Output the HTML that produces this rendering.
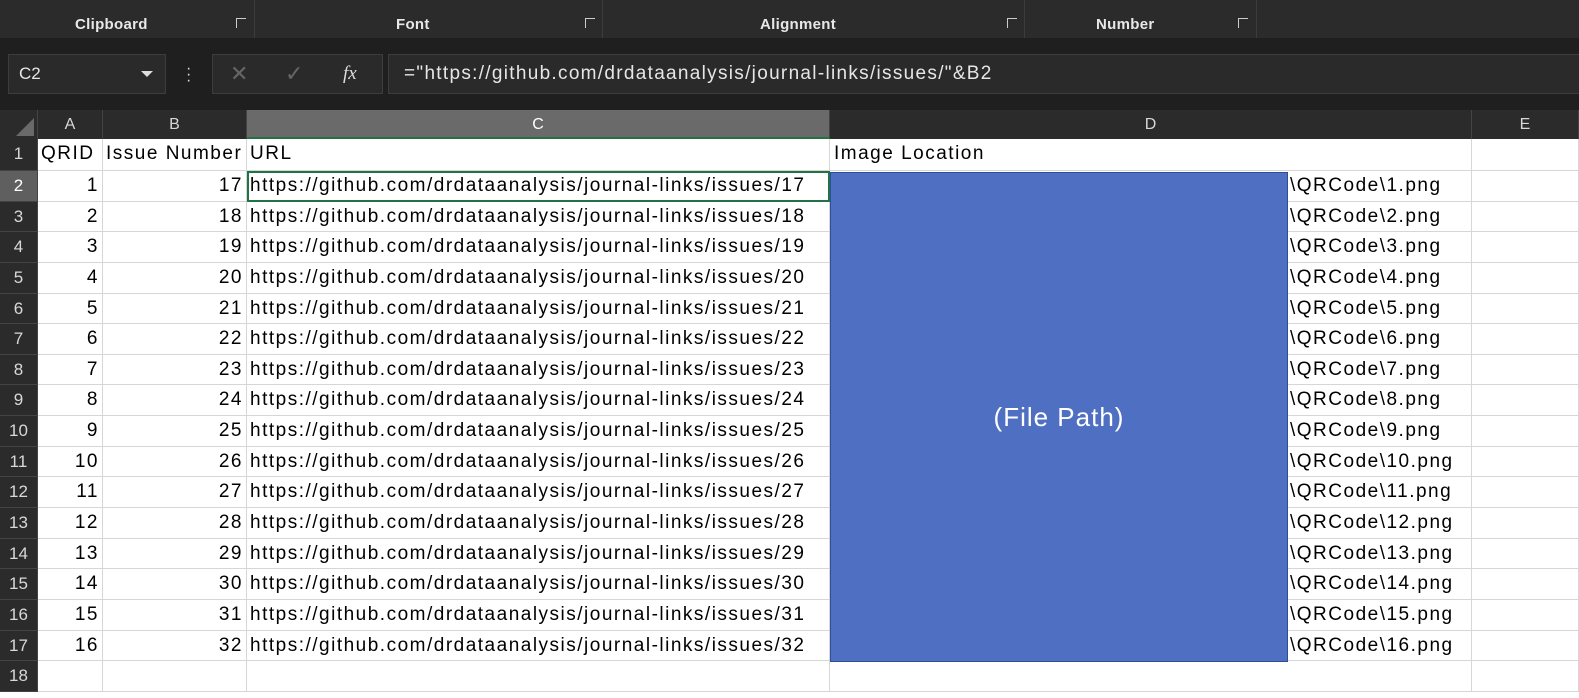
<!DOCTYPE html><html><head><style>
*{margin:0;padding:0;box-sizing:border-box}
body{width:1579px;height:698px;background:#fff;position:relative;overflow:hidden;font-family:"Liberation Sans",Arial,sans-serif}
.rib{position:absolute;left:0;top:0;width:1579px;height:38px;background:#2b2b2b;color:#e8e8e8;font-size:15px;font-weight:bold;letter-spacing:0.3px}
.rib span{position:absolute;top:16px}
.rib i{position:absolute;top:0;width:1px;height:38px;background:#3c3c3c}
.rib b{position:absolute;top:18px;width:10px;height:10px;border:1px solid #ccc;border-right:none;border-bottom:none}
.fb{position:absolute;left:0;top:38px;width:1579px;height:72px;background:#1f1f1f}
.box{position:absolute;background:#2a2a2a;border:1px solid #3d3d3d;color:#e6e6e6}
.colh{position:absolute;top:110px;height:29px;left:0;width:1579px;background:#2b2b2b}
.colh div{position:absolute;top:0;height:29px;line-height:29px;text-align:center;color:#d8d8d8;font-size:16px;border-right:1px solid #444}
.rows{position:absolute;left:0;top:139px;width:1579px;display:flex;flex-direction:column}
.r{height:30.65px;display:flex;font-size:19px;letter-spacing:1.5px;color:#000;line-height:30px}
.r div{flex:none;border-right:1px solid #d6d6d6;border-bottom:1px solid #d6d6d6;white-space:nowrap;overflow:visible;padding:0 3px}
.r .h{width:38px;background:#2b2b2b;color:#d8d8d8;border-color:#444;text-align:center;padding:0;font-size:17px;letter-spacing:0}
.a{width:65px;text-align:right}.b{width:144px;text-align:right}.c{width:583px}.d{width:642px;padding-left:460px!important}.e{width:107px}
</style></head><body>
<div class="rib">
<span style="left:75px">Clipboard</span><b style="left:236px"></b><i style="left:254px"></i>
<span style="left:396px">Font</span><b style="left:585px"></b><i style="left:602px"></i>
<span style="left:760px">Alignment</span><b style="left:1007px"></b><i style="left:1024px"></i>
<span style="left:1096px">Number</span><b style="left:1238px"></b><i style="left:1256px"></i>
</div>
<div class="fb">
<div class="box" style="left:8px;top:16px;width:158px;height:40px;font-size:17px;line-height:38px;padding-left:10px">C2<span style="position:absolute;right:12px;top:16px;border-left:6px solid transparent;border-right:6px solid transparent;border-top:6px solid #ddd"></span></div>
<div style="position:absolute;left:186px;top:28px;color:#ddd;font-size:16px;line-height:6px">·<br>·<br>·</div>
<div class="box" style="left:212px;top:16px;width:171px;height:40px;color:#666;font-size:22px;line-height:38px"><span style="position:absolute;left:17px">✕</span><span style="position:absolute;left:72px">✓</span><span style="position:absolute;left:130px;color:#ddd;font-style:italic;font-family:'Liberation Serif',serif;font-size:19px">fx</span></div>
<div class="box" style="left:388px;top:16px;width:1200px;height:40px;font-size:19px;letter-spacing:1.3px;line-height:38px;padding-left:15px">="https://github.com/drdataanalysis/journal-links/issues/"&amp;B2</div>
</div>
<div class="colh">
<div style="left:0;width:38px"><span style="position:absolute;right:3px;bottom:3px;border-left:18px solid transparent;border-bottom:18px solid #6a6a6a"></span></div>
<div style="left:38px;width:65px">A</div><div style="left:103px;width:144px">B</div>
<div style="left:247px;width:583px;background:#6a6a6a;color:#fff;border-bottom:2px solid #217346">C</div>
<div style="left:830px;width:642px">D</div><div style="left:1472px;width:107px">E</div>
</div>
<div class="rows">
<div class="r" style="height:32px"><div class="h">1</div><div class="a" style="text-align:left">QRID</div><div class="b" style="text-align:left">Issue Number</div><div class="c">URL</div><div class="d" style="padding-left:4px!important">Image Location</div><div class="e"></div></div>
<div class="r"><div class="h" style="background:#5f5f5f;color:#fff">2</div><div class="a">1</div><div class="b">17</div><div class="c" style="outline:2px solid #217346;outline-offset:-2px">https://github.com/drdataanalysis/journal-links/issues/17</div><div class="d">\QRCode\1.png</div><div class="e"></div></div>
<div class="r"><div class="h">3</div><div class="a">2</div><div class="b">18</div><div class="c">https://github.com/drdataanalysis/journal-links/issues/18</div><div class="d">\QRCode\2.png</div><div class="e"></div></div>
<div class="r"><div class="h">4</div><div class="a">3</div><div class="b">19</div><div class="c">https://github.com/drdataanalysis/journal-links/issues/19</div><div class="d">\QRCode\3.png</div><div class="e"></div></div>
<div class="r"><div class="h">5</div><div class="a">4</div><div class="b">20</div><div class="c">https://github.com/drdataanalysis/journal-links/issues/20</div><div class="d">\QRCode\4.png</div><div class="e"></div></div>
<div class="r"><div class="h">6</div><div class="a">5</div><div class="b">21</div><div class="c">https://github.com/drdataanalysis/journal-links/issues/21</div><div class="d">\QRCode\5.png</div><div class="e"></div></div>
<div class="r"><div class="h">7</div><div class="a">6</div><div class="b">22</div><div class="c">https://github.com/drdataanalysis/journal-links/issues/22</div><div class="d">\QRCode\6.png</div><div class="e"></div></div>
<div class="r"><div class="h">8</div><div class="a">7</div><div class="b">23</div><div class="c">https://github.com/drdataanalysis/journal-links/issues/23</div><div class="d">\QRCode\7.png</div><div class="e"></div></div>
<div class="r"><div class="h">9</div><div class="a">8</div><div class="b">24</div><div class="c">https://github.com/drdataanalysis/journal-links/issues/24</div><div class="d">\QRCode\8.png</div><div class="e"></div></div>
<div class="r"><div class="h">10</div><div class="a">9</div><div class="b">25</div><div class="c">https://github.com/drdataanalysis/journal-links/issues/25</div><div class="d">\QRCode\9.png</div><div class="e"></div></div>
<div class="r"><div class="h">11</div><div class="a">10</div><div class="b">26</div><div class="c">https://github.com/drdataanalysis/journal-links/issues/26</div><div class="d">\QRCode\10.png</div><div class="e"></div></div>
<div class="r"><div class="h">12</div><div class="a">11</div><div class="b">27</div><div class="c">https://github.com/drdataanalysis/journal-links/issues/27</div><div class="d">\QRCode\11.png</div><div class="e"></div></div>
<div class="r"><div class="h">13</div><div class="a">12</div><div class="b">28</div><div class="c">https://github.com/drdataanalysis/journal-links/issues/28</div><div class="d">\QRCode\12.png</div><div class="e"></div></div>
<div class="r"><div class="h">14</div><div class="a">13</div><div class="b">29</div><div class="c">https://github.com/drdataanalysis/journal-links/issues/29</div><div class="d">\QRCode\13.png</div><div class="e"></div></div>
<div class="r"><div class="h">15</div><div class="a">14</div><div class="b">30</div><div class="c">https://github.com/drdataanalysis/journal-links/issues/30</div><div class="d">\QRCode\14.png</div><div class="e"></div></div>
<div class="r"><div class="h">16</div><div class="a">15</div><div class="b">31</div><div class="c">https://github.com/drdataanalysis/journal-links/issues/31</div><div class="d">\QRCode\15.png</div><div class="e"></div></div>
<div class="r"><div class="h">17</div><div class="a">16</div><div class="b">32</div><div class="c">https://github.com/drdataanalysis/journal-links/issues/32</div><div class="d">\QRCode\16.png</div><div class="e"></div></div>
<div class="r"><div class="h">18</div><div class="a"></div><div class="b"></div><div class="c"></div><div class="d"></div><div class="e"></div></div>
</div>
<div style="position:absolute;left:830px;top:172px;width:458px;height:490px;background:#4f6fc2;border:1px solid #2f4d99;color:#fff;font-size:26px;letter-spacing:1px;display:flex;align-items:center;justify-content:center">(File Path)</div>
</body></html>
